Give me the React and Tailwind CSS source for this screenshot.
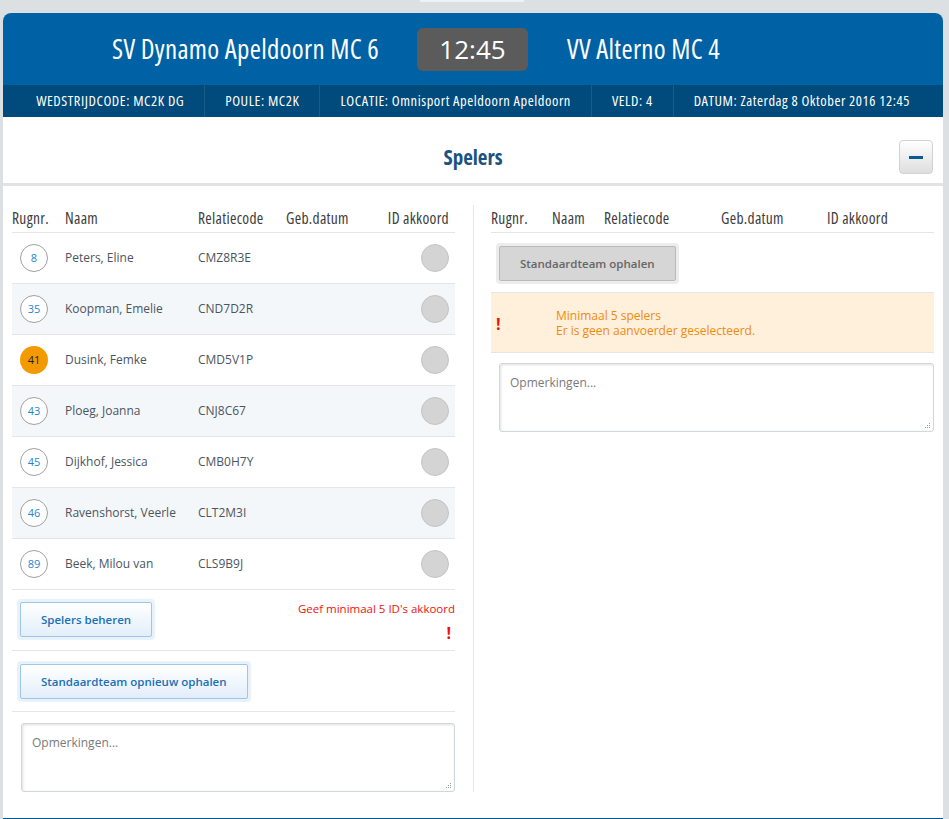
import React from 'react';

const narrow = { fontFamily: '"Open Sans", "Noto Sans", sans-serif', fontStretch: '75%' };
const body = { fontFamily: '"Open Sans", "Noto Sans", sans-serif', fontStretch: '100%' };

const players = [
  { nr: 8, name: 'Peters, Eline', code: 'CMZ8R3E' },
  { nr: 35, name: 'Koopman, Emelie', code: 'CND7D2R' },
  { nr: 41, name: 'Dusink, Femke', code: 'CMD5V1P', captain: true },
  { nr: 43, name: 'Ploeg, Joanna', code: 'CNJ8C67' },
  { nr: 45, name: 'Dijkhof, Jessica', code: 'CMB0H7Y' },
  { nr: 46, name: 'Ravenshorst, Veerle', code: 'CLT2M3I' },
  { nr: 89, name: 'Beek, Milou van', code: 'CLS9B9J' },
];

const info = [
  'WEDSTRIJDCODE: MC2K DG',
  'POULE: MC2K',
  'LOCATIE: Omnisport Apeldoorn Apeldoorn',
  'VELD: 4',
  'DATUM: Zaterdag 8 Oktober 2016 12:45',
];

const BlueButton = ({ children }) => (
  <div className="inline-block rounded-[4px] bg-[#e9f2fa] p-[3px]">
    <button
      style={body}
      className="h-[35px] px-5 rounded-[2px] border border-[#9cc7ea] bg-gradient-to-b from-white to-[#e2eefa] text-[11.5px] font-semibold text-[#1a70b6]"
    >
      {children}
    </button>
  </div>
);

const Textarea = () => (
  <div className="relative">
    <textarea
      style={body}
      placeholder="Opmerkingen..."
      className="block w-full h-[69px] resize-none rounded-[3px] border border-[#cfd6dd] shadow-[inset_1px_1px_3px_rgba(0,0,0,0.12)] px-[10px] py-[10px] text-[12px] text-[#555] placeholder:text-[#7a7a7a] outline-none"
    />
    <svg className="absolute right-[3px] bottom-[3px]" width="7" height="7" viewBox="0 0 7 7">
      <rect x="5" y="1" width="1" height="1" fill="#999" />
      <rect x="3" y="3" width="1" height="1" fill="#999" />
      <rect x="5" y="3" width="1" height="1" fill="#999" />
      <rect x="1" y="5" width="1" height="1" fill="#999" />
      <rect x="3" y="5" width="1" height="1" fill="#999" />
      <rect x="5" y="5" width="1" height="1" fill="#999" />
    </svg>
  </div>
);

export default function App() {
  return (
    <div className="min-h-screen bg-[#dde0e3] pl-[3px]">
      <div className="h-[2px] w-[104px] ml-[417px] bg-[#eef2f6]" />
      <div className="mt-[11px] w-[940px] rounded-t-lg overflow-hidden bg-white border-b-[3px] border-[#00578f]">
        {/* Match header */}
        <div style={narrow} className="h-[72px] bg-[#0061a5] flex items-center text-white whitespace-nowrap">
          <div className="flex-1 text-right pr-[38px] text-[27px] tracking-[0.3px]">SV Dynamo Apeldoorn MC 6</div>
          <div
            style={body}
            className="w-[111px] h-[43px] rounded-md bg-[#5b5b5b] flex items-center justify-center text-[26px]"
          >
            12:45
          </div>
          <div className="flex-1 pl-[39px] text-[27px] tracking-[0.3px]">VV Alterno MC 4</div>
        </div>

        {/* Info bar */}
        <div style={narrow} className="h-[32px] bg-[#004b7c] flex justify-center text-white text-[14.5px] tracking-[0.55px] whitespace-nowrap">
          {info.map((t, i) => (
            <div
              key={t}
              className={`px-5 flex items-center ${i > 0 ? 'border-l border-[#1d5b87]' : ''}`}
            >
              {t}
            </div>
          ))}
        </div>

        {/* Spelers title */}
        <div className="relative h-[66px] flex items-center justify-center pt-4">
          <span style={narrow} className="text-[21px] font-bold text-[#1c5283]">Spelers</span>
          <button className="absolute right-[10px] top-[23px] w-[34px] h-[34px] rounded-[4px] border border-[#d2d2d2] bg-gradient-to-b from-white to-[#dedede] flex items-center justify-center">
            <span className="block w-[14px] h-[3px] bg-[#0b5a91]" />
          </button>
        </div>
        <div className="h-[3px] bg-[#e3e3e3]" />

        {/* Columns */}
        <div className="flex pt-[19px] pb-[26px]">
          {/* Left team */}
          <div className="ml-[9px] w-[443px] mr-[18px]">
            <div style={narrow} className="h-[28px] flex items-center pt-[1px] border-b border-[#e3e6e9] text-[15.5px] tracking-[0.3px] text-[#3c3c3c] whitespace-nowrap">
              <div className="w-[53px]">Rugnr.</div>
              <div className="w-[133px]">Naam</div>
              <div className="w-[88px]">Relatiecode</div>
              <div className="flex-1">Geb.datum</div>
              <div className="pr-[6px]">ID akkoord</div>
            </div>
            {players.map((p, i) => (
              <div
                key={p.nr}
                style={body}
                className={`h-[51px] flex items-center border-b border-[#e3e6e9] text-[12px] text-[#4b5561] ${i % 2 === 1 ? 'bg-[#f4f7fa]' : 'bg-white'}`}
              >
                <div className="w-[53px] pl-2">
                  <div
                    className={`w-[28px] h-[28px] rounded-full flex items-center justify-center text-[11px] ${
                      p.captain
                        ? 'bg-[#f39a00] text-[#222]'
                        : 'border border-[#a0a0a0] bg-white text-[#1c87d2]'
                    }`}
                  >
                    {p.nr}
                  </div>
                </div>
                <div className="w-[133px]">{p.name}</div>
                <div className="flex-1">{p.code}</div>
                <div className="pr-[6px]">
                  <div className="w-[28px] h-[28px] rounded-full bg-[#d4d4d4] border border-[#c4c4c4]" />
                </div>
              </div>
            ))}
            <div className="h-[61px] flex justify-between border-b border-[#e3e6e9] pt-[9px] pl-[5px]">
              <div>
                <BlueButton>Spelers beheren</BlueButton>
              </div>
              <div style={body} className="text-right text-[11.5px] text-[#f01010]">
                <div className="leading-[17px] pt-[1px]">Geef minimaal 5 ID's akkoord</div>
                <div className="text-[16px] font-bold leading-[18px] mt-[7px] pr-[4px]">!</div>
              </div>
            </div>
            <div className="h-[61px] border-b border-[#e3e6e9] pt-[10px] pl-[5px]">
              <BlueButton>Standaardteam opnieuw ophalen</BlueButton>
            </div>
            <div className="pt-[11px] pl-[9px]">
              <Textarea />
            </div>
          </div>

          {/* Right team */}
          <div className="border-l border-[#e6e6e6] pl-[17px] w-[461px]">
            <div style={narrow} className="h-[28px] flex items-center pt-[1px] border-b border-[#e3e6e9] text-[15.5px] tracking-[0.3px] text-[#3c3c3c] whitespace-nowrap">
              <div className="w-[61px]">Rugnr.</div>
              <div className="w-[52px]">Naam</div>
              <div className="w-[117px]">Relatiecode</div>
              <div className="w-[106px]">Geb.datum</div>
              <div>ID akkoord</div>
            </div>
            <div className="h-[60px] border-b border-[#e3e6e9] pt-[10px] pl-[5px]">
              <div className="inline-block rounded-[4px] bg-[#ececec] p-[3px]">
                <button
                  style={body}
                  className="h-[35px] px-5 rounded-[2px] border border-[#b9b9b9] bg-[#d6d6d6] text-[11.5px] font-semibold text-[#666]"
                >
                  Standaardteam ophalen
                </button>
              </div>
            </div>
            <div style={body} className="h-[60px] bg-[#fff0dc] border-b border-[#e3e6e9] flex items-center text-[12px]">
              <div className="w-[65px] pl-[5px] text-[16px] font-bold text-[#ee1111] pt-[3px]">!</div>
              <div className="text-[#f08a0c] leading-[15px] pt-[1px]">
                <div>Minimaal 5 spelers</div>
                <div>Er is geen aanvoerder geselecteerd.</div>
              </div>
            </div>
            <div className="pt-[10px] pl-[8px]">
              <Textarea />
            </div>
          </div>
        </div>
      </div>
    </div>
  );
}
